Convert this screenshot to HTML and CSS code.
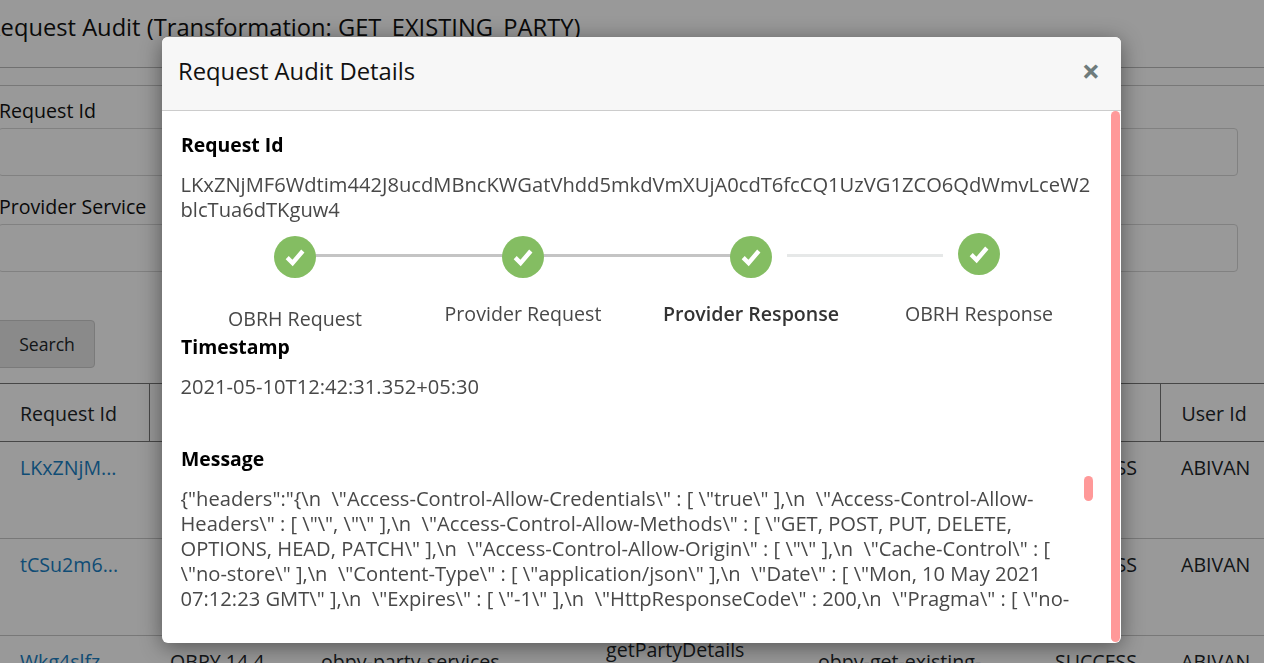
FILE: index.html
```html
<!DOCTYPE html>
<html lang="en">
<head>
<meta charset="utf-8">
<title>Request Audit</title>
<link rel="stylesheet" href="styles.css">
</head>
<body>
<main class="page">
  <h1 class="page-title">Request Audit (Transformation: GET_EXISTING_PARTY)</h1>
  <hr class="rule">
  <form class="filters">
    <label class="field-label">Request Id</label>
    <div class="field-input"></div>
    <label class="field-label">Provider Service</label>
    <div class="field-input"></div>
    <button class="search-btn" type="button">Search</button>
  </form>
  <table class="audit-table">
    <colgroup>
      <col class="c1"><col class="c2"><col class="c3"><col class="c4"><col class="c5"><col class="c6"><col class="c7">
    </colgroup>
    <thead>
      <tr><th>Request Id</th><th></th><th></th><th></th><th></th><th></th><th>User Id</th></tr>
    </thead>
    <tbody>
      <tr><td><a href="#">LKxZNjM...</a></td><td></td><td></td><td></td><td></td><td>SUCCESS</td><td>ABIVAN</td></tr>
      <tr><td><a href="#">tCSu2m6...</a></td><td></td><td></td><td></td><td></td><td>SUCCESS</td><td>ABIVAN</td></tr>
      <tr class="last-row"><td><a href="#">Wkg4slfz...</a></td><td>OBPY 14.4</td><td>obpy-party-services</td><td class="raised">getPartyDetails</td><td>obpy-get-existing-<br>party</td><td>SUCCESS</td><td>ABIVAN</td></tr>
    </tbody>
  </table>
</main>

<div class="backdrop"></div>

<section class="modal">
  <header class="modal-header">
    <h2 class="modal-title">Request Audit Details</h2>
    <span class="modal-close">×</span>
  </header>
  <div class="modal-body">
    <h3 class="detail-label">Request Id</h3>
    <p class="detail-value">LKxZNjMF6Wdtim442J8ucdMBncKWGatVhdd5mkdVmXUjA0cdT6fcCQ1UzVG1ZCO6QdWmvLceW2<br>blcTua6dTKguw4</p>
    <div class="stepper">
      <div class="step">
        <span class="step-dot"><svg viewBox="0 0 20 20" class="check"><path d="M3.5 10.5 8 15 16.5 5"/></svg></span>
        <span class="step-name step-name-low">OBRH Request</span>
        <i class="step-line"></i>
      </div>
      <div class="step">
        <span class="step-dot"><svg viewBox="0 0 20 20" class="check"><path d="M3.5 10.5 8 15 16.5 5"/></svg></span>
        <span class="step-name">Provider Request</span>
        <i class="step-line"></i>
      </div>
      <div class="step">
        <span class="step-dot"><svg viewBox="0 0 20 20" class="check"><path d="M3.5 10.5 8 15 16.5 5"/></svg></span>
        <span class="step-name step-name-active">Provider Response</span>
        <i class="step-line step-line-pending"></i>
      </div>
      <div class="step step-raised">
        <span class="step-dot"><svg viewBox="0 0 20 20" class="check"><path d="M3.5 10.5 8 15 16.5 5"/></svg></span>
        <span class="step-name">OBRH Response</span>
      </div>
    </div>
    <h3 class="detail-label">Timestamp</h3>
    <p class="detail-value detail-stamp">2021-05-10T12:42:31.352+05:30</p>
    <h3 class="detail-label">Message</h3>
    <div class="message">
      <p class="detail-value">{"headers":"{\n&nbsp; \"Access-Control-Allow-Credentials\" : [ \"true\" ],\n&nbsp; \"Access-Control-Allow-<br>Headers\" : [ \"\", \"\" ],\n&nbsp; \"Access-Control-Allow-Methods\" : [ \"GET, POST, PUT, DELETE,<br>OPTIONS, HEAD, PATCH\" ],\n&nbsp; \"Access-Control-Allow-Origin\" : [ \"\" ],\n&nbsp; \"Cache-Control\" : [<br>\"no-store\" ],\n&nbsp; \"Content-Type\" : [ \"application/json\" ],\n&nbsp; \"Date\" : [ \"Mon, 10 May 2021<br>07:12:23 GMT\" ],\n&nbsp; \"Expires\" : [ \"-1\" ],\n&nbsp; \"HttpResponseCode\" : 200,\n&nbsp; \"Pragma\" : [ \"no-</p>
    </div>
    <span class="inner-thumb"></span>
  </div>
  <span class="outer-thumb"></span>
</section>
</body>
</html>
```
FILE: styles.css
```css
* { box-sizing: border-box; }
html, body { margin: 0; height: 100%; overflow: hidden; }
body { background: #fff; color: #212529; font-family: "Open Sans", "Liberation Sans", sans-serif; font-size: 19.6px; }

.page { width: 1264px; height: 663px; overflow: hidden; }
.page-title { margin: 0 0 0 -14px; padding-top: 11px; height: 67px; font-size: 23.7px; font-weight: 400; line-height: 32px; white-space: nowrap; color: #111; }
.rule { margin: 0; height: 19px; border: 0; border-top: 1px solid #bbb; border-bottom: 1px solid #c8c8c8; }

.filters { padding-top: 10px; height: 297px; }
.field-label { display: block; height: 32px; margin-left: -1px; line-height: 30px; color: #111; }
.field-input { width: 1240px; height: 48px; margin-left: -2px; margin-bottom: 16px; border: 1px solid #d8d8d8; border-radius: 4px; background: #fff; }
.search-btn { display: block; width: 115px; height: 48px; margin: 48px 0 0 -20px; padding: 0 0 0 19px; border: 1px solid #ccc; border-radius: 4px; background: #e6e6e6; font-family: inherit; font-size: 17.6px; color: #212529; }

.audit-table { width: 1264px; table-layout: fixed; border-collapse: collapse; }
.c1 { width: 149px; } .c2 { width: 151px; } .c3 { width: 285px; } .c4 { width: 212px; } .c5 { width: 237px; } .c6 { width: 126px; } .c7 { width: 104px; }
.audit-table th { height: 58px; padding: 1px 20px 0; border-top: 1px solid #777; border-bottom: 1px solid #777; border-right: 1px solid #777; font-weight: 400; text-align: left; white-space: nowrap; overflow: hidden; }
.audit-table th:last-child { border-right: 0; padding-left: 21px; padding-right: 0; }
.audit-table td { height: 97px; padding: 13px 21px; vertical-align: top; line-height: 25px; border-bottom: 1px solid #c8c8c8; white-space: nowrap; overflow: hidden; }
.audit-table td:first-child { padding-left: 20px; }
.audit-table a { color: #1a7fc4; text-decoration: none; }
.last-row .raised { padding-top: 1px; }

.backdrop { position: fixed; inset: 0; background: rgba(0, 0, 0, .4); }

.modal { position: absolute; left: 162px; top: 37px; width: 959px; height: 606px; background: #fff; border-radius: 6px; box-shadow: 0 4px 22px rgba(0, 0, 0, .45); overflow: hidden; }
.modal-header { display: flex; justify-content: space-between; align-items: center; height: 74px; padding: 0 21px 6px 16px; background: #f7f7f7; border-bottom: 1px solid #ccc; }
.modal-title { margin: 0; font-size: 23.8px; font-weight: 400; color: #111; }
.modal-close { font-size: 32px; font-weight: 700; line-height: 1; color: #6f7c7c; }

.modal-body { position: relative; padding: 20px 28px 0 19px; }
.detail-label { margin: 0; font-size: 19.4px; line-height: 28px; font-weight: 700; color: #000; }
.detail-value { margin: 0 0 0 -.5px; line-height: 25px; font-size: 20.15px; white-space: nowrap; color: #484848; }
.detail-label + .detail-value { margin-top: 13px; }
.detail-stamp { height: 71px; }

.stepper { display: flex; width: 912px; margin-top: 14px; height: 97px; }
.step { position: relative; flex: 1 1 0; display: flex; flex-direction: column; align-items: center; }
.step-raised { margin-top: -3px; }
.step-dot { display: flex; align-items: center; justify-content: center; width: 42px; height: 42px; border-radius: 50%; background: #84bd62; position: relative; z-index: 1; }
.check { width: 24px; height: 24px; fill: none; stroke: #fff; stroke-width: 3.6; }
.step-name { margin-top: 23px; line-height: 25px; color: #484848; white-space: nowrap; }
.step-name-low { margin-top: 28px; }
.step-name-active { font-weight: 600; color: #333; }
.step-raised .step-name { margin-top: 26px; }
.step-line { position: absolute; left: 50%; width: 100%; top: 18px; height: 3px; background: #c4c4c4; }
.step-line-pending { left: calc(50% + 36px); width: 156px; background: #e6e8e8; }

.message { margin-top: 13px; height: 125px; overflow: hidden; }
.inner-thumb { position: absolute; right: 28px; top: 365px; width: 9px; height: 25px; border-radius: 5px; background: #ff9999; }
.outer-thumb { position: absolute; right: 1px; top: 74px; bottom: 1px; width: 9px; border-radius: 5px; background: #ff9999; }
```
